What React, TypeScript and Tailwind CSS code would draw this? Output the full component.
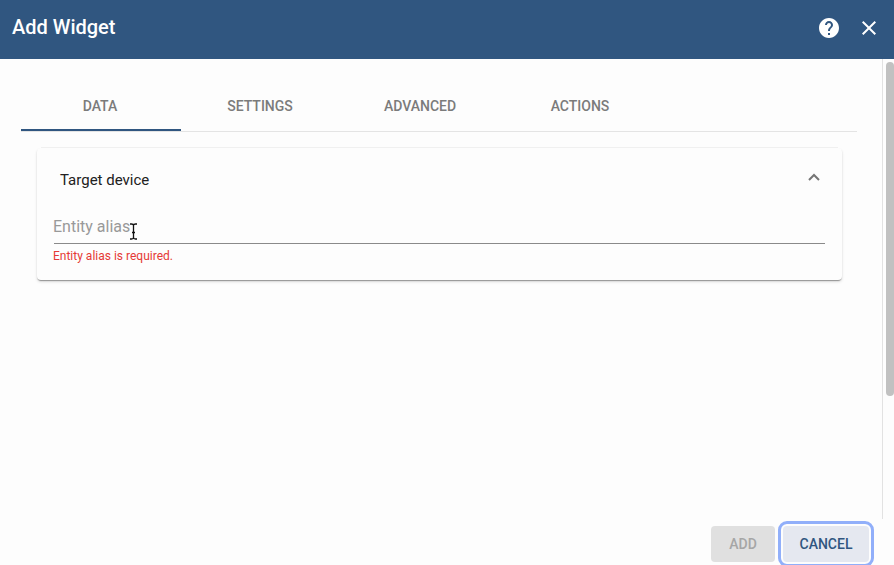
import React from "react";

const TABS = ["Data", "Settings", "Advanced", "Actions"];

function HelpIcon() {
  return (
    <svg viewBox="0 0 24 24" className="size-6" fill="#fff">
      <path d="M12 2C6.48 2 2 6.48 2 12s4.480 10 10 10 10-4.480 10-10S17.520 2 12 2zm1 17h-2v-2h2v2zm2.070-7.750l-.9.920C13.450 12.900 13 13.500 13 15h-2v-.5c0-1.100.450-2.100 1.170-2.830l1.240-1.260c.370-.360.590-.860.590-1.410 0-1.100-.9-2-2-2s-2 .9-2 2H8c0-2.210 1.790-4 4-4s4 1.790 4 4c0 .880-.360 1.680-.930 2.250z" />
    </svg>
  );
}

function CloseIcon() {
  return (
    <svg viewBox="0 0 24 24" className="size-6" fill="#fff">
      <path d="M19 6.410L17.590 5 12 10.590 6.410 5 5 6.410 10.590 12 5 17.590 6.410 19 12 13.410 17.590 19 19 17.590 13.410 12z" />
    </svg>
  );
}

function TextCursor() {
  return (
    <svg viewBox="0 0 9 17" className="absolute left-[75px] top-[8px] h-[17px] w-[9px]" fill="none" stroke="#111" strokeWidth="1.3">
      <path d="M1 1h1.500c1.200 0 2 .5 2 1.500C4.500 1.500 5.300 1 6.500 1H8M4.500 2.500v12M1 16h1.500c1.200 0 2-.5 2-1.500 0 1 .8 1.500 2 1.500H8M3 9.500h3" />
    </svg>
  );
}

export default function App() {
  return (
    <div className="flex h-[565px] w-[894px] flex-col overflow-hidden bg-[#fdfdfd] font-[Roboto,sans-serif]">
      <header className="flex h-[59px] shrink-0 items-start justify-between bg-[#305680] pl-[12px] pr-[13.5px] pt-[15px] text-white">
        <h1 className="text-[20px] font-medium leading-6">Add Widget</h1>
        <div className="flex gap-4 pt-px">
          <HelpIcon />
          <CloseIcon />
        </div>
      </header>

      <main className="flex h-[460px] shrink-0">
        <div className="w-[883px] border-r border-[#e2e2e2] pl-[21px] pr-[25px] pt-[22px]">
          <nav className="flex h-[51px] border-b border-[#e4e4e4]">
            {TABS.map((tab, i) => (
              <button
                key={tab}
                className={`h-[50px] w-40 border-b-2 pr-[2px] pt-[2px] text-center text-[14px] font-medium uppercase leading-5 text-[#7b7b7b] ${i === 0 ? "border-[#305680]" : "border-transparent"}`}
              >
                {tab}
              </button>
            ))}
          </nav>
          <div className="ml-5 mr-[19px] mt-[15px] h-px bg-[#f1f1f1]" />
          <section className="ml-4 mr-[15px] h-[132px] rounded-[4px] bg-[#fdfdfd] px-[17px] pt-[22px] shadow-[0_2px_1px_-1px_rgba(0,0,0,0.22),0_1px_1px_0_rgba(0,0,0,0.16),0_2px_3px_0_rgba(0,0,0,0.12)]">
            <div className="flex h-5 items-center justify-between pl-[6px] pr-[5px]">
              <h2 className="text-[15px] leading-5 text-[#212121]">Target device</h2>
              <svg viewBox="0 0 12 8" className="mb-[6px] h-2 w-3" fill="none" stroke="#757575" strokeWidth="2">
                <path d="M1 7l5-5 5 5" />
              </svg>
            </div>
            <div className="relative mt-[25px] h-[29px] border-b border-[#8a8a8a] text-[16px] leading-6 text-[#999]">
              <span className="-ml-px">Entity alias</span>
              <TextCursor />
            </div>
            <p className="-ml-px mt-1 text-[12px] leading-4 text-[#e53935]">Entity alias is required.</p>
          </section>
        </div>
        <div className="flex grow justify-end pt-[3px]">
          <div className="h-[334px] w-2 rounded-full bg-[#c1c1c1]" />
        </div>
      </main>

      <footer className="flex shrink-0 justify-end gap-2 pr-[25px] pt-[7px] text-[14px] font-medium">
        <button className="h-9 w-16 rounded-[4px] bg-[#e0e0e0] text-[#a6a6a6]">ADD</button>
        <button className="h-9 w-[86px] rounded-[4px] bg-[#e5e8f0] text-[#305680] outline-3 outline-offset-2 outline-[#91affa]">CANCEL</button>
      </footer>
    </div>
  );
}
